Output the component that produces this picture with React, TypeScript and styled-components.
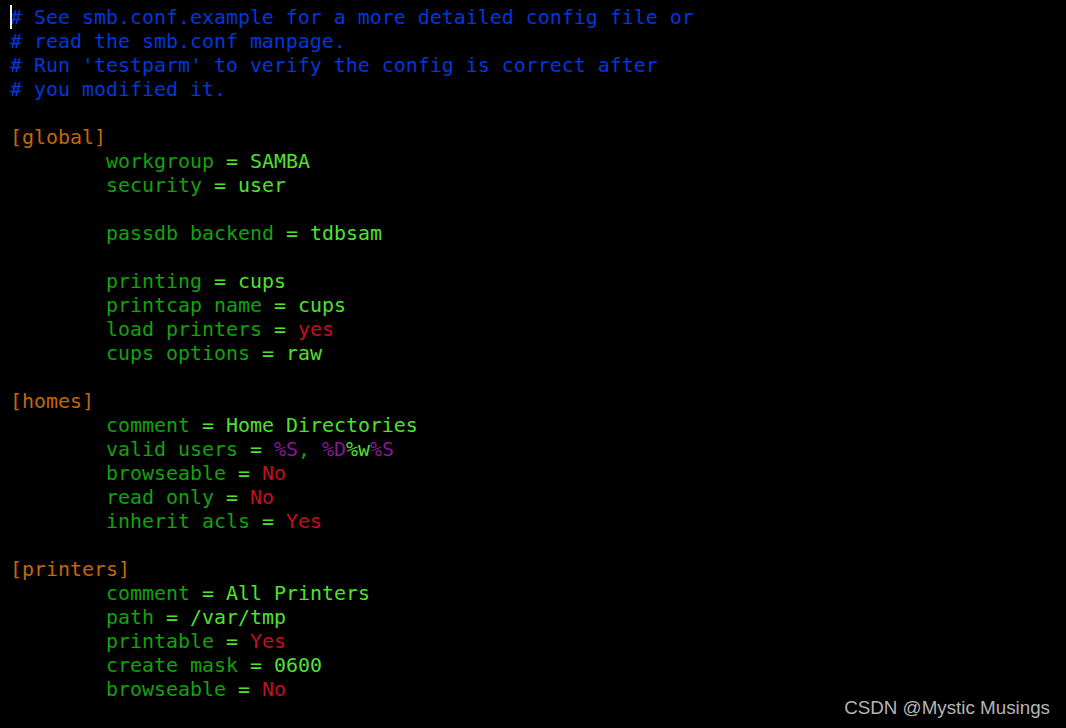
import React from "react";
import styled, { createGlobalStyle } from "styled-components";

const Global = createGlobalStyle`
  html, body { margin: 0; padding: 0; background: #000; }
  body { width: 1066px; height: 728px; overflow: hidden; }
`;

const COLORS = {
  comment: "#0037da",
  section: "#c1680a",
  key: "#13a10e",
  value: "#4fe12f",
  red: "#c50f1f",
  purple: "#881798",
} as const;

type Tone = keyof typeof COLORS;

const Screen = styled.div`
  position: relative;
  width: 1066px;
  height: 728px;
  background: #000;
  box-sizing: border-box;
  padding: 6px 0 0 10px;
`;

const Code = styled.div`
  display: flex;
  flex-direction: column;
  font-family: "DejaVu Sans Mono", "Liberation Mono", monospace;
  font-size: 19.93px;
  line-height: 24px;
  white-space: pre;
`;

const Line = styled.div<{ $indent?: boolean }>`
  height: 24px;
  position: relative;
  padding-left: ${(p) => (p.$indent ? "96px" : "0")};
`;

const Span = styled.span<{ $tone: Tone }>`
  color: ${(p) => COLORS[p.$tone]};
`;

const Cursor = styled.span`
  position: absolute;
  left: 0;
  top: -1px;
  width: 2px;
  height: 24px;
  background: #f2f2f2;
`;

const Watermark = styled.div`
  position: absolute;
  right: 16px;
  bottom: 9px;
  font-family: "Liberation Sans", Arial, sans-serif;
  font-size: 18.8px;
  color: #b4b4b4;
`;

type Seg = [Tone, string];
type LineData = { indent?: boolean; segs: Seg[]; cursor?: boolean };

const kv = (k: string, v: Seg[]): LineData => ({
  indent: true,
  segs: [["key", k + " "], ["value", "= "], ...v],
});

const lines: LineData[] = [
  { segs: [["comment", "# See smb.conf.example for a more detailed config file or"]], cursor: true },
  { segs: [["comment", "# read the smb.conf manpage."]] },
  { segs: [["comment", "# Run 'testparm' to verify the config is correct after"]] },
  { segs: [["comment", "# you modified it."]] },
  { segs: [] },
  { segs: [["section", "[global]"]] },
  kv("workgroup", [["value", "SAMBA"]]),
  kv("security", [["value", "user"]]),
  { segs: [] },
  kv("passdb backend", [["value", "tdbsam"]]),
  { segs: [] },
  kv("printing", [["value", "cups"]]),
  kv("printcap name", [["value", "cups"]]),
  kv("load printers", [["red", "yes"]]),
  kv("cups options", [["value", "raw"]]),
  { segs: [] },
  { segs: [["section", "[homes]"]] },
  kv("comment", [["value", "Home Directories"]]),
  kv("valid users", [
    ["purple", "%S"],
    ["key", ", "],
    ["purple", "%D"],
    ["value", "%w"],
    ["purple", "%S"],
  ]),
  kv("browseable", [["red", "No"]]),
  kv("read only", [["red", "No"]]),
  kv("inherit acls", [["red", "Yes"]]),
  { segs: [] },
  { segs: [["section", "[printers]"]] },
  kv("comment", [["value", "All Printers"]]),
  kv("path", [["value", "/var/tmp"]]),
  kv("printable", [["red", "Yes"]]),
  kv("create mask", [["value", "0600"]]),
  kv("browseable", [["red", "No"]]),
];

export default function App() {
  return (
    <>
      <Global />
      <Screen>
        <Code>
          {lines.map((l, i) => (
            <Line key={i} $indent={l.indent}>
              {l.cursor && <Cursor />}
              {l.segs.map(([tone, text], j) => (
                <Span key={j} $tone={tone}>
                  {text}
                </Span>
              ))}
              {l.segs.length === 0 ? " " : null}
            </Line>
          ))}
        </Code>
        <Watermark>CSDN @Mystic Musings</Watermark>
      </Screen>
    </>
  );
}
